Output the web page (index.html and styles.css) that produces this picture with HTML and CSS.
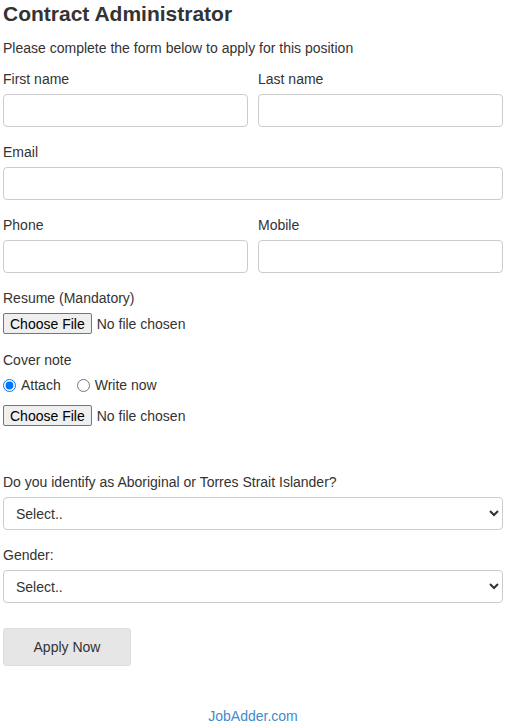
FILE: index.html
```html
<!DOCTYPE html>
<html>
<head>
<meta charset="utf-8">
<title>Contract Administrator</title>
<link rel="stylesheet" href="styles.css">
</head>
<body>
<main class="page">
  <h1 class="title">Contract Administrator</h1>
  <p class="intro">Please complete the form below to apply for this position</p>
  <form class="form">
    <div class="row">
      <div class="group">
        <label class="label">First name</label>
        <input class="control" type="text">
      </div>
      <div class="group">
        <label class="label">Last name</label>
        <input class="control" type="text">
      </div>
    </div>
    <div class="group">
      <label class="label">Email</label>
      <input class="control" type="text">
    </div>
    <div class="row">
      <div class="group">
        <label class="label">Phone</label>
        <input class="control" type="text">
      </div>
      <div class="group">
        <label class="label">Mobile</label>
        <input class="control" type="text">
      </div>
    </div>
    <div class="group group-file">
      <label class="label">Resume (Mandatory)</label>
      <input class="file" type="file">
    </div>
    <div class="group group-cover">
      <label class="label">Cover note</label>
      <div class="radios">
        <label class="radio"><input type="radio" name="cover" checked> Attach</label>
        <label class="radio"><input type="radio" name="cover"> Write now</label>
      </div>
      <input class="file" type="file">
    </div>
    <div class="group">
      <label class="label">Do you identify as Aboriginal or Torres Strait Islander?</label>
      <select class="control select"><option>Select..</option></select>
    </div>
    <div class="group">
      <label class="label">Gender:</label>
      <select class="control select"><option>Select..</option></select>
    </div>
    <button class="apply" type="button">Apply Now</button>
  </form>
  <footer class="footer"><a class="link" href="#">JobAdder.com</a></footer>
</main>
</body>
</html>
```
FILE: styles.css
```css
html, body {
  margin: 0;
  padding: 0;
  background: #fff;
}
body {
  font-family: "Liberation Sans", Arial, sans-serif;
  font-size: 14px;
  line-height: 20px;
  color: #333;
}
.page {
  padding: 0 3px;
}
.title {
  margin: 0;
  font-size: 21px;
  line-height: 28px;
  font-weight: bold;
  color: #333;
}
.intro {
  margin: 10px 0 0;
  line-height: 20px;
}
.form {
  margin-top: 11px;
  display: flex;
  flex-direction: column;
}
.row {
  display: grid;
  grid-template-columns: 1fr 1fr;
  column-gap: 10px;
}
.group {
  display: flex;
  flex-direction: column;
  margin-bottom: 15px;
}
.label {
  display: block;
  margin-bottom: 5px;
}
.control {
  box-sizing: border-box;
  height: 33px;
  width: 100%;
  border: 1px solid #ccc;
  border-radius: 4px;
  padding: 6px 12px;
  font-family: inherit;
  font-size: 14px;
  color: #333;
  background: #fff;
  margin: 0;
}
.select {
  padding: 0 8px;
}
.file {
  font-family: inherit;
  font-size: 14px;
  color: #333;
  margin: 0;
  height: 21px;
}
.file::file-selector-button {
  font-family: inherit;
  font-size: 14px;
  color: #000;
  background: #efefef;
  border: 1px solid #767676;
  border-radius: 2px;
  padding: 0 6px;
  height: 21px;
  margin-right: 5px;
}
.group-file {
  margin-bottom: 16px;
}
.group-cover {
  margin-bottom: 46px;
}
.radios {
  display: flex;
  gap: 16px;
  margin-bottom: 10px;
}
.radio {
  display: flex;
  align-items: center;
  gap: 5px;
}
.radio input {
  margin: 0;
  width: 13px;
  height: 13px;
}
.apply {
  align-self: flex-start;
  margin-top: 10px;
  width: 128px;
  height: 38px;
  background: #e6e6e6;
  border: 1px solid #ddd;
  border-radius: 3px;
  font-family: inherit;
  font-size: 14px;
  color: #333;
}
.footer {
  text-align: center;
  margin-top: 40px;
  padding-bottom: 10px;
}
.link {
  color: #428bca;
  text-decoration: none;
}
```
